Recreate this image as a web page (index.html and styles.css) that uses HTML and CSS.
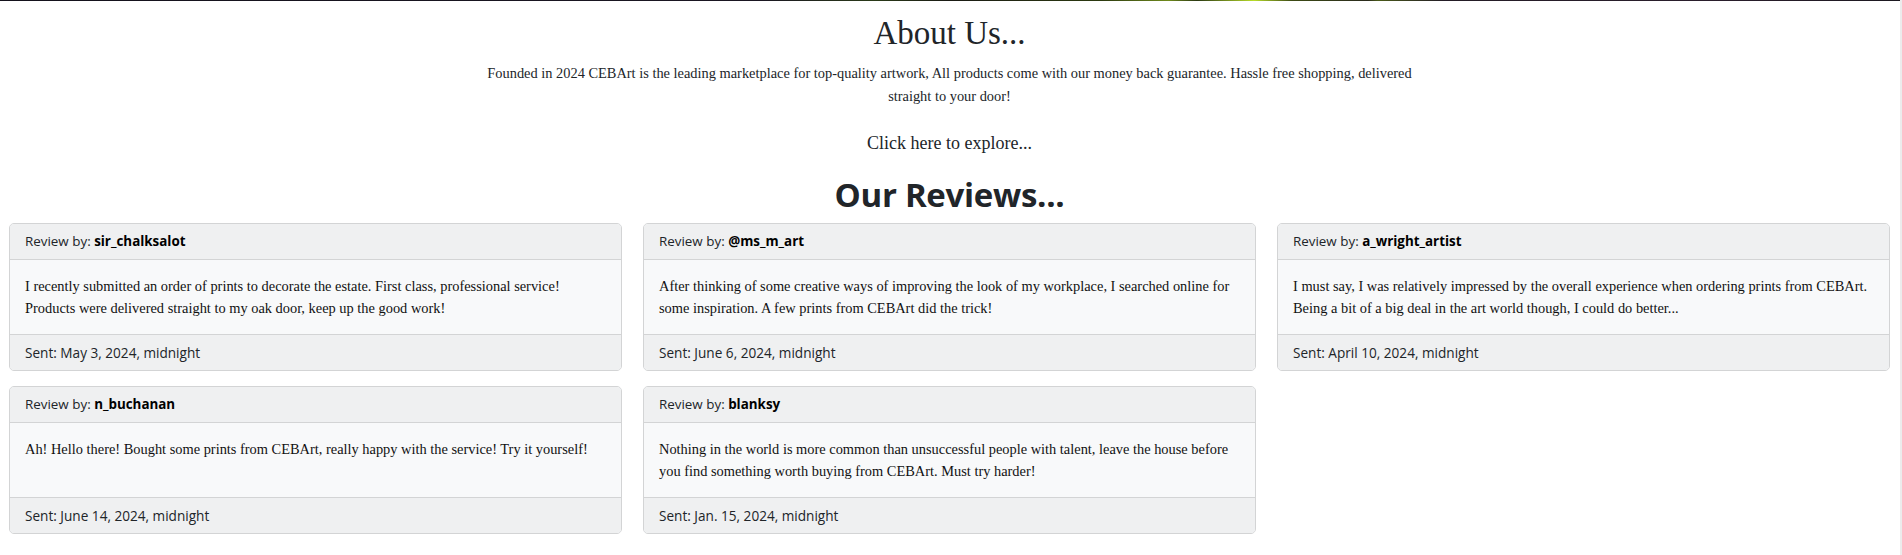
FILE: index.html
```html
<!DOCTYPE html>
<html lang="en">
<head>
<meta charset="utf-8">
<title>CEBArt - About Us</title>
<link rel="stylesheet" href="styles.css">
</head>
<body>
<div class="topbar"></div>
<main class="page">
  <section class="about">
    <h1 class="about-title">About Us...</h1>
    <p class="about-text">Founded in 2024 CEBArt is the leading marketplace for top-quality artwork, All products come with our money back guarantee. Hassle free shopping, delivered straight to your door!</p>
    <a class="explore" href="#">Click here to explore...</a>
  </section>
  <h2 class="reviews-title">Our Reviews...</h2>
  <section class="reviews">
    <article class="card">
      <header class="card-header">Review by: <strong>sir_chalksalot</strong></header>
      <div class="card-body"><p>I recently submitted an order of prints to decorate the estate. First class, professional service! Products were delivered straight to my oak door, keep up the good work!</p></div>
      <footer class="card-footer">Sent: May 3, 2024, midnight</footer>
    </article>
    <article class="card">
      <header class="card-header">Review by: <strong>@ms_m_art</strong></header>
      <div class="card-body"><p>After thinking of some creative ways of improving the look of my workplace, I searched online for some inspiration. A few prints from CEBArt did the trick!</p></div>
      <footer class="card-footer">Sent: June 6, 2024, midnight</footer>
    </article>
    <article class="card">
      <header class="card-header">Review by: <strong>a_wright_artist</strong></header>
      <div class="card-body"><p>I must say, I was relatively impressed by the overall experience when ordering prints from CEBArt. Being a bit of a big deal in the art world though, I could do better...</p></div>
      <footer class="card-footer">Sent: April 10, 2024, midnight</footer>
    </article>
    <article class="card">
      <header class="card-header">Review by: <strong>n_buchanan</strong></header>
      <div class="card-body"><p>Ah! Hello there! Bought some prints from CEBArt, really happy with the service! Try it yourself!</p></div>
      <footer class="card-footer">Sent: June 14, 2024, midnight</footer>
    </article>
    <article class="card">
      <header class="card-header">Review by: <strong>blanksy</strong></header>
      <div class="card-body"><p>Nothing in the world is more common than unsuccessful people with talent, leave the house before you find something worth buying from CEBArt. Must try harder!</p></div>
      <footer class="card-footer">Sent: Jan. 15, 2024, midnight</footer>
    </article>
  </section>
</main>
</body>
</html>
```
FILE: styles.css
```css
html, body {
  margin: 0;
  padding: 0;
  background: #ffffff;
}

body {
  color: #212529;
  font-family: "Liberation Serif", "Times New Roman", serif;
  min-height: 555px;
  border-right: 2px solid #ececec;
  box-sizing: border-box;
}

.topbar {
  height: 1px;
  background: linear-gradient(90deg,
    #14121c 0%, #1a1622 40%, #2a3a18 46%, #1a1a14 50%,
    #2c3a10 58%, #6f8a1c 61.5%, #2a3812 63%, #b8dc2a 66%, #3c4a14 68%,
    #2a2a1c 72%, #4a5a1a 72.5%, #231c26 76%, #2a1e2c 90%, #1c1820 100%);
}

.page {
  padding: 0 10px 20px 9px;
}

.about {
  width: 50%;
  margin: 0 auto;
  text-align: center;
}

.about-title {
  font-family: "Liberation Serif", "Times New Roman", serif;
  font-weight: 400;
  font-size: 33px;
  line-height: 38px;
  margin: 13px 0 0;
}

.about-text {
  font-size: 14.4px;
  line-height: 23px;
  margin: 10px 0 0;
}

.explore {
  display: block;
  font-size: 18px;
  line-height: 27px;
  color: #212529;
  text-decoration: none;
  margin-top: 22px;
}

.reviews-title {
  font-family: "Open Sans", "Noto Sans", sans-serif;
  font-weight: 700;
  font-size: 33px;
  line-height: 40px;
  text-align: center;
  margin: 18px 0 8px;
  letter-spacing: -0.3px;
}

.reviews {
  display: grid;
  grid-template-columns: repeat(3, 1fr);
  column-gap: 21px;
  row-gap: 15px;
}

.card {
  display: flex;
  flex-direction: column;
  border: 1px solid #d3d4d5;
  border-radius: 5px;
  background: #f8f9fa;
  overflow: hidden;
}

.card-header,
.card-footer {
  font-family: "Open Sans", "Noto Sans", sans-serif;
  font-size: 13.4px;
  line-height: 21px;
  padding: 7px 15px;
  background: #eff0f1;
  color: #212529;
}

.card-footer {
  font-size: 13.6px;
}

.card-header {
  border-bottom: 1px solid #d3d4d5;
}

.card-header strong {
  font-weight: 700;
  color: #000;
}

.card-footer {
  border-top: 1px solid #d3d4d5;
}

.card-body {
  flex: 1;
  padding: 15px 15px 15px;
}

.card-body p {
  margin: 0;
  font-size: 14.4px;
  line-height: 22px;
  color: #111;
}
```
